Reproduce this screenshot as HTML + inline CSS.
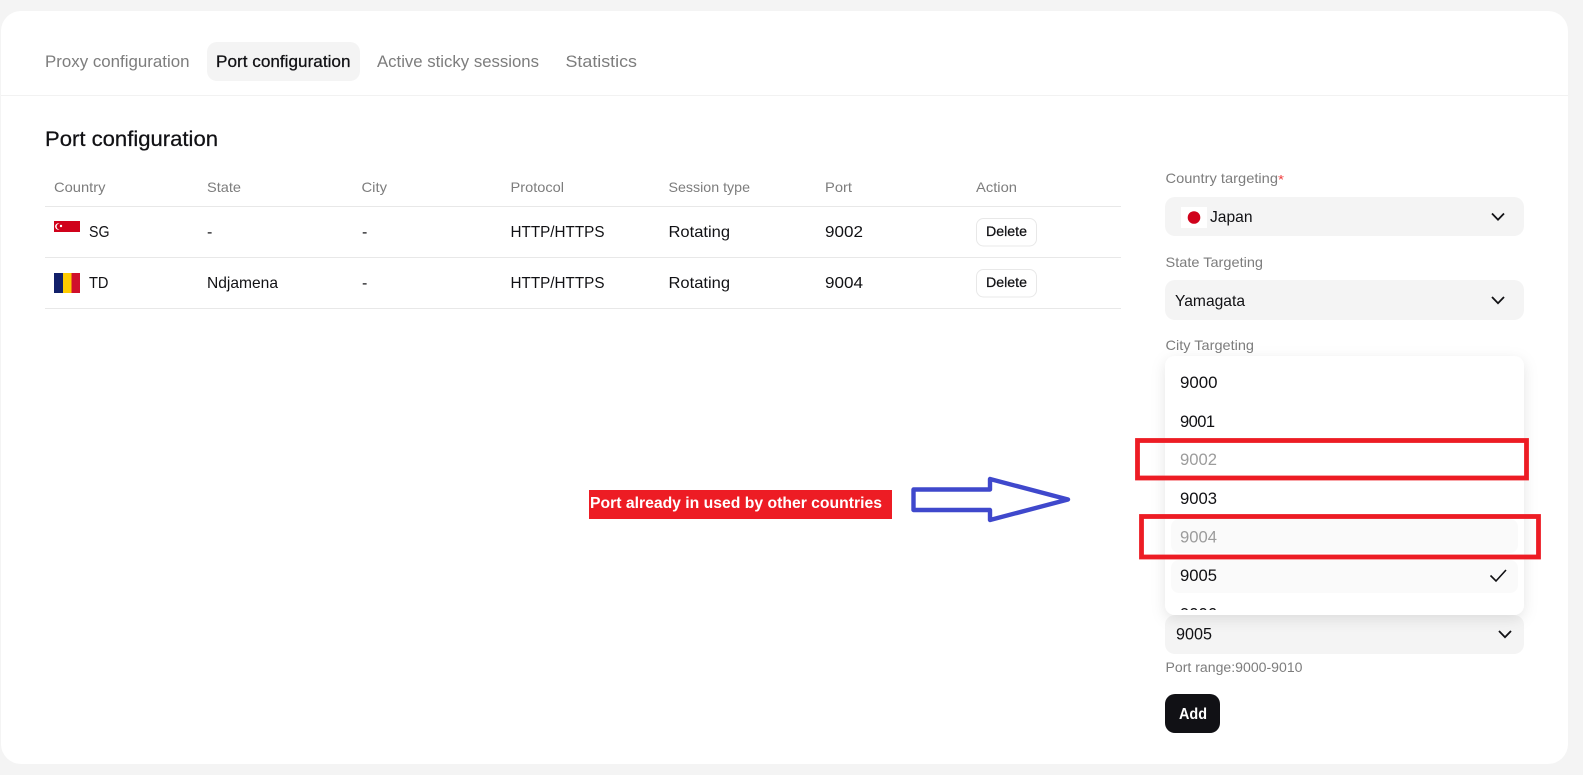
<!DOCTYPE html>
<html lang="en">
<head>
<meta charset="utf-8">
<title>Port configuration</title>
<style>
html,body{margin:0;padding:0;width:1583px;height:775px;overflow:hidden;background:#f4f4f4}
svg{display:block;position:absolute;left:0;top:0}
text{font-family:"Liberation Sans",sans-serif;white-space:pre}
.g{fill:#7d7d7d}
.k{fill:#111114}
.d{fill:#9c9c9c}
.m{stroke:currentColor;stroke-width:.25}
.tab{font-size:16.5px}
.th{font-size:14px}
.td{font-size:16px}
.lbl{font-size:14px}
.opt{font-size:16.5px}
</style>
</head>
<body>
<svg width="1583" height="775" viewBox="0 0 1583 775" xmlns="http://www.w3.org/2000/svg">
<defs>
<filter id="sh" x="-10%" y="-10%" width="120%" height="120%">
<feDropShadow dx="0" dy="4" stdDeviation="7" flood-color="#000" flood-opacity=".1"/>
</filter>
<clipPath id="clipList"><rect x="1165" y="356" width="359" height="254"/></clipPath>
</defs>

<!-- card -->
<rect x="1" y="11" width="1567" height="753" rx="20" fill="#fff"/>
<rect x="1" y="95" width="1567" height="1" fill="#f2f2f2"/>

<!-- tabs -->
<rect x="207" y="42" width="153" height="39" rx="10" fill="#f4f4f4"/>
<text class="tab g" x="45" y="67" textLength="144.5" lengthAdjust="spacingAndGlyphs">Proxy configuration</text>
<text class="tab k m" x="216" y="67" textLength="134.5" lengthAdjust="spacingAndGlyphs" style="color:#111114">Port configuration</text>
<text class="tab g" x="377" y="67" textLength="162" lengthAdjust="spacingAndGlyphs">Active sticky sessions</text>
<text class="tab g" x="565.5" y="67" textLength="71.5" lengthAdjust="spacingAndGlyphs">Statistics</text>

<!-- title -->
<text class="k m" x="45" y="146" font-size="21.5" textLength="173" lengthAdjust="spacingAndGlyphs" style="color:#111114">Port configuration</text>

<!-- table head -->
<text class="th g" x="54" y="192" textLength="51.5" lengthAdjust="spacingAndGlyphs">Country</text>
<text class="th g" x="207" y="192" textLength="34" lengthAdjust="spacingAndGlyphs">State</text>
<text class="th g" x="361.5" y="192" textLength="25.5" lengthAdjust="spacingAndGlyphs">City</text>
<text class="th g" x="510.5" y="192" textLength="53.5" lengthAdjust="spacingAndGlyphs">Protocol</text>
<text class="th g" x="668.5" y="192" textLength="81.5" lengthAdjust="spacingAndGlyphs">Session type</text>
<text class="th g" x="825" y="192" textLength="27" lengthAdjust="spacingAndGlyphs">Port</text>
<text class="th g" x="976" y="192" textLength="41" lengthAdjust="spacingAndGlyphs">Action</text>
<rect x="45" y="206" width="1076" height="1" fill="#e8e8e8"/>
<rect x="45" y="257" width="1076" height="1" fill="#e8e8e8"/>
<rect x="45" y="308" width="1076" height="1" fill="#e8e8e8"/>

<!-- row 1 -->
<rect x="54" y="221" width="26" height="11" fill="#d0021b"/>
<circle cx="58.3" cy="226.5" r="3.2" fill="#fff"/>
<circle cx="59.6" cy="226.5" r="3" fill="#d0021b"/>
<circle cx="61" cy="226" r="1.2" fill="#fff"/>
<text class="td k" x="89" y="237" textLength="20.5" lengthAdjust="spacingAndGlyphs">SG</text>
<text class="td k" x="207" y="237">-</text>
<text class="td k" x="362" y="237">-</text>
<text class="td k" x="510.5" y="237" textLength="94" lengthAdjust="spacingAndGlyphs">HTTP/HTTPS</text>
<text class="td k" x="668.5" y="237" textLength="61.5" lengthAdjust="spacingAndGlyphs">Rotating</text>
<text class="td k" x="825" y="237" textLength="38" lengthAdjust="spacingAndGlyphs">9002</text>
<rect x="976.5" y="218.5" width="60" height="27.5" rx="7" fill="#fff" stroke="#e8e8e8"/>
<text class="k m" x="986" y="236" font-size="13.5" textLength="41" lengthAdjust="spacingAndGlyphs" style="color:#111114">Delete</text>

<!-- row 2 -->
<rect x="54" y="273" width="9" height="20" fill="#12206a"/>
<rect x="63" y="273" width="8.5" height="20" fill="#fecb00"/>
<rect x="71.5" y="273" width="8.5" height="20" fill="#d0102c"/>
<text class="td k" x="89" y="288" textLength="19.5" lengthAdjust="spacingAndGlyphs">TD</text>
<text class="td k" x="207" y="288" textLength="71" lengthAdjust="spacingAndGlyphs">Ndjamena</text>
<text class="td k" x="362" y="288">-</text>
<text class="td k" x="510.5" y="288" textLength="94" lengthAdjust="spacingAndGlyphs">HTTP/HTTPS</text>
<text class="td k" x="668.5" y="288" textLength="61.5" lengthAdjust="spacingAndGlyphs">Rotating</text>
<text class="td k" x="825" y="288" textLength="38" lengthAdjust="spacingAndGlyphs">9004</text>
<rect x="976.5" y="269.5" width="60" height="27.5" rx="7" fill="#fff" stroke="#e8e8e8"/>
<text class="k m" x="986" y="287" font-size="13.5" textLength="41" lengthAdjust="spacingAndGlyphs" style="color:#111114">Delete</text>

<!-- form -->
<text class="lbl g" x="1165.5" y="183" textLength="112.5" lengthAdjust="spacingAndGlyphs">Country targeting</text>
<text x="1278" y="184" font-size="13" fill="#f03a3a" textLength="6" lengthAdjust="spacingAndGlyphs">*</text>
<rect x="1165" y="197" width="359" height="39" rx="10" fill="#f4f4f4"/>
<rect x="1181" y="207" width="26" height="21" fill="#fff"/>
<circle cx="1194" cy="217.5" r="6.3" fill="#d0021b"/>
<text class="td k" x="1210" y="222" textLength="42.5" lengthAdjust="spacingAndGlyphs">Japan</text>
<path d="M1492 213.5L1498 219.7L1504 213.5" fill="none" stroke="#111114" stroke-width="1.8"/>

<text class="lbl g" x="1165.5" y="267" textLength="97.5" lengthAdjust="spacingAndGlyphs">State Targeting</text>
<rect x="1165" y="280" width="359" height="40" rx="10" fill="#f4f4f4"/>
<text class="td k" x="1175" y="306" textLength="70" lengthAdjust="spacingAndGlyphs">Yamagata</text>
<path d="M1492 297L1498 303.2L1504 297" fill="none" stroke="#111114" stroke-width="1.8"/>

<text class="lbl g" x="1165.5" y="350" textLength="88.5" lengthAdjust="spacingAndGlyphs">City Targeting</text>

<!-- port select under dropdown -->
<rect x="1165" y="615" width="359" height="39" rx="10" fill="#f4f4f4"/>
<text class="opt k" x="1176" y="639.5" textLength="36" lengthAdjust="spacingAndGlyphs">9005</text>
<path d="M1499 631L1505 637.2L1511 631" fill="none" stroke="#111114" stroke-width="1.8"/>
<text class="g" x="1165.5" y="672" font-size="13.5" textLength="137" lengthAdjust="spacingAndGlyphs">Port range:9000-9010</text>
<rect x="1165" y="694" width="55" height="39" rx="10" fill="#111115"/>
<text x="1179" y="719" font-size="15.5" font-weight="700" fill="#fff" textLength="28" lengthAdjust="spacingAndGlyphs">Add</text>

<!-- dropdown -->
<rect x="1165" y="356" width="359" height="259" rx="10" fill="#fff" filter="url(#sh)"/>
<rect x="1171" y="519" width="347" height="34" rx="8" fill="#fafafa"/>
<rect x="1171" y="560" width="347" height="33" rx="8" fill="#fafafa"/>
<g clip-path="url(#clipList)">
<text class="opt k" x="1180" y="388" textLength="37.5" lengthAdjust="spacingAndGlyphs">9000</text>
<text class="opt k" x="1180" y="427" textLength="35" lengthAdjust="spacing">9001</text>
<text class="opt d" x="1180" y="465" textLength="37" lengthAdjust="spacingAndGlyphs">9002</text>
<text class="opt k" x="1180" y="504" textLength="37" lengthAdjust="spacingAndGlyphs">9003</text>
<text class="opt d" x="1180" y="542.5" textLength="37" lengthAdjust="spacingAndGlyphs">9004</text>
<text class="opt k" x="1180" y="581" textLength="37" lengthAdjust="spacingAndGlyphs">9005</text>
<text class="opt k" x="1180" y="619.5" textLength="37" lengthAdjust="spacingAndGlyphs">9006</text>
</g>
<path d="M1490.5 575.5L1496 581L1506 570" fill="none" stroke="#111114" stroke-width="1.6"/>

<!-- annotations -->
<rect x="1137.5" y="440.5" width="389" height="37.5" fill="none" stroke="#ed1c24" stroke-width="4.8"/>
<rect x="1141.5" y="516.5" width="397" height="40.5" fill="none" stroke="#ed1c24" stroke-width="4.8"/>
<rect x="589" y="490" width="303" height="29" fill="#ed1c24"/>
<text x="590" y="508" font-size="16" font-weight="700" fill="#fff" textLength="292" lengthAdjust="spacingAndGlyphs">Port already in used by other countries</text>
<path d="M913.5 489.5H990V479L1068 499.5L990 520V510H913.5Z" fill="#fff" stroke="#3f48cc" stroke-width="4.4" stroke-linejoin="round"/>
</svg>
</body>
</html>
